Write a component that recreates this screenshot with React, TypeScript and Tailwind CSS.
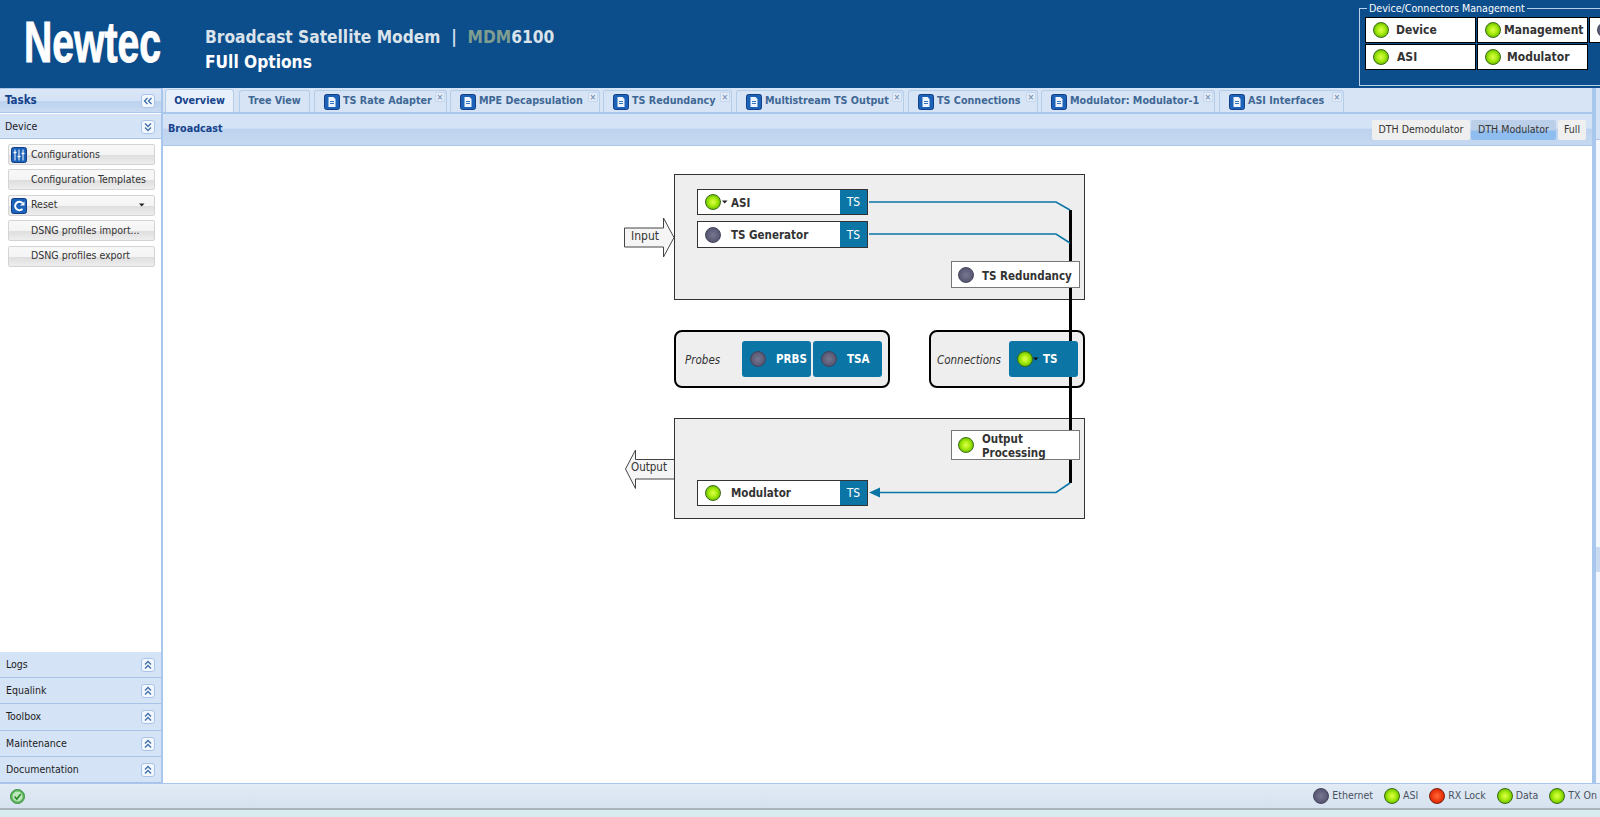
import React from "react";

const FONT = "font-['DejaVu_Sans_Condensed','DejaVu_Sans',sans-serif]";

function Led({ color = "green", className = "" }: { color?: "green" | "gray" | "red"; className?: string }) {
  const c =
    color === "green"
      ? "bg-[radial-gradient(circle_at_50%_50%,#dcff4e_0%,#aeee12_38%,#76cc00_68%,#4a9c00_100%)] border-[#3d6b12]"
      : color === "red"
      ? "bg-[radial-gradient(circle_at_50%_50%,#ff6a3a_0%,#ee3a10_50%,#c01c00_100%)] border-[#7a2010]"
      : "bg-[radial-gradient(circle_at_50%_50%,#77778f_0%,#5c5c78_60%,#45455e_100%)] border-[#44445a]";
  return <span className={`block w-4 h-4 shrink-0 rounded-full border ${c} ${className}`} />;
}

function Caret({ className = "" }: { className?: string }) {
  return (
    <svg width="6" height="4" viewBox="0 0 6 4" className={className}>
      <path d="M0 0.5h5.5L2.75 3.5z" fill="currentColor" />
    </svg>
  );
}

function Chevrons({ dir }: { dir: "up" | "down" | "left" }) {
  const rotate = dir === "up" ? "" : dir === "down" ? "rotate-180" : "-rotate-90";
  return (
    <span className="flex items-center justify-center w-[14px] h-[14px] rounded-[3px] border border-[#a9c4e6] bg-[#f2f7fd]">
      <svg width="10" height="10" viewBox="0 0 10 10" className={rotate} fill="none" stroke="#3f6fa8" strokeWidth="1.3">
        <path d="M2 4.5L5 1.5L8 4.5" />
        <path d="M2 8.5L5 5.5L8 8.5" />
      </svg>
    </span>
  );
}

function DocIcon() {
  return (
    <svg width="16" height="16" viewBox="0 0 16 16" className="shrink-0">
      <rect x="0.5" y="0.5" width="15" height="15" rx="2" fill="#1b62b8" stroke="#123f86" />
      <path d="M4.5 3h5l2 2v8h-7z" fill="#eef4fb" />
      <path d="M6 7.5h4M6 9.5h4" stroke="#1b62b8" strokeWidth="0.9" />
    </svg>
  );
}

function Tab({ label, width, active, doc, gap }: { label: string; width: string; active?: boolean; doc?: boolean; gap: string }) {
  return (
    <div
      className={`relative flex items-center gap-[3px] h-[22px] shrink-0 rounded-t-[3px] border border-b-0 border-[#b4cde9] text-[10.7px] font-bold ${width} ${gap} ${
        doc ? "justify-start pl-[9px]" : "justify-center"
      } ${active ? "bg-[#e8f1fb] text-[#15428b] h-[23px]" : "bg-[#d6e4f5] text-[#3f6794]"}`}
    >
      {doc && <DocIcon />}
      <span className="whitespace-nowrap">{label}</span>
      {doc && (
        <span className="absolute right-[1px] top-[1px] flex items-center justify-center w-[10px] h-[10px] rounded-[1px] bg-[#e3ecf8] border border-[#c4d6ec] text-[#7f98b8] text-[9px] leading-none font-bold">
          ×
        </span>
      )}
    </div>
  );
}

function TaskButton({ label, icon, caret }: { label: string; icon?: React.ReactNode; caret?: boolean }) {
  return (
    <div className="relative flex items-center h-[21px] rounded-[2px] border border-[#d4d4d4] bg-[linear-gradient(#f8f8f8_0%,#f4f4f4_50%,#dedede_55%,#eeeeee_100%)] text-[10.5px] text-[#333] pl-[22px] pr-1">
      {icon && <span className="absolute left-[2px] top-[2px]">{icon}</span>}
      <span className="whitespace-nowrap">{label}</span>
      {caret && <Caret className="ml-auto mr-[5px] text-[#222]" />}
    </div>
  );
}

function AccHeader({ label, h }: { label: string; h: string }) {
  return (
    <div className={`flex items-center justify-between pl-[6px] pr-[6px] border-b border-[#a8c3e6] bg-[#d5e3f6] text-[10.5px] text-[#1c1c1c] ${h}`}>
      <span>{label}</span>
      <Chevrons dir="up" />
    </div>
  );
}

function DeviceCell({ label, color = "green", gap }: { label: string; color?: "green" | "gray"; gap: string }) {
  return (
    <div className={`flex items-center h-[26px] bg-white border border-black text-[12px] font-bold text-[#333] pl-[7px] ${gap}`}>
      <Led color={color} />
      <span className="whitespace-nowrap">{label}</span>
    </div>
  );
}

function StatusItem({ color, label }: { color: "green" | "gray" | "red"; label: string }) {
  return (
    <div className="flex items-center gap-[3px] text-[10.5px] text-[#4a5260]">
      <Led color={color} />
      <span className="whitespace-nowrap">{label}</span>
    </div>
  );
}

function Node({ pos, led, label, caret, textTop }: { pos: string; led: "green" | "gray"; label: string; caret?: boolean; textTop: string }) {
  return (
    <div className={`absolute flex items-stretch bg-white border border-[#333] ${pos}`}>
      <div className="relative flex items-center flex-1 pl-[7px]">
        <Led color={led} />
        {caret && <Caret className="absolute left-[24px] top-[10px] text-[#222]" />}
        <span className={`absolute left-[33px] text-[11.5px] leading-[15px] font-bold text-[#333] whitespace-nowrap ${textTop}`}>{label}</span>
      </div>
      <div className="flex items-center justify-center w-[27px] bg-[#0b75a6] text-white text-[12px]">TS</div>
    </div>
  );
}

function SideNode({ pos, led, children, textPos }: { pos: string; led: "green" | "gray"; children: React.ReactNode; textPos: string }) {
  return (
    <div className={`absolute flex items-center bg-white border border-[#777] pl-[6px] ${pos}`}>
      <Led color={led} />
      <span className={`absolute left-[30px] text-[11.5px] leading-[14px] font-bold text-[#333] whitespace-nowrap ${textPos}`}>{children}</span>
    </div>
  );
}

function BlueButton({ pos, led, label, textLeft, caret }: { pos: string; led: "green" | "gray"; label: string; textLeft: string; caret?: boolean }) {
  return (
    <div className={`absolute flex items-center h-[36px] w-[69px] rounded-[3px] bg-[#0b75a6] ${pos}`}>
      <Led color={led} className="ml-[8px]" />
      {caret && <Caret className="absolute left-[24px] top-[16px] text-[#111]" />}
      <span className={`absolute top-[10px] text-[11.5px] leading-[16px] font-bold text-white ${textLeft}`}>{label}</span>
    </div>
  );
}

function Diagram() {
  return (
    <div className="relative w-[480px] h-[360px] mt-[26px] ml-[457px]">
      <div className="absolute left-[54px] top-[2px] w-[411px] h-[126px] bg-[#eeeeee] border border-[#333]" />
      <div className="absolute left-[54px] top-[246px] w-[411px] h-[101px] bg-[#eeeeee] border border-[#333]" />
      <div className="absolute left-[54px] top-[158px] w-[216px] h-[58px] bg-[#eeeeee] border-2 border-black rounded-[8px]" />
      <div className="absolute left-[309px] top-[158px] w-[156px] h-[58px] bg-[#eeeeee] border-2 border-black rounded-[8px]" />

      <svg width="480" height="360" viewBox="0 0 480 360" className="absolute left-0 top-0" fill="none">
        <path d="M450.5 38V311" stroke="#000" strokeWidth="3" />
        <path d="M249 30H436L450 38" stroke="#0b75a6" strokeWidth="1.6" />
        <path d="M249 62H436L450 71" stroke="#0b75a6" strokeWidth="1.6" />
        <path d="M258 320.5H436L450 311" stroke="#0b75a6" strokeWidth="1.6" />
        <path d="M249 320.5L260 315.5V325.5Z" fill="#0b75a6" />
        <path d="M4.5 56V75H43.5V85L54 65.5L43.5 46V56Z" fill="#f5f5f5" stroke="#444" />
        <path d="M54 287.5H15.5V278L5.5 297L15.5 316.5V307H54" fill="#f5f5f5" stroke="#444" />
      </svg>

      <span className="absolute left-[11px] top-[57px] text-[12px] leading-[15px] text-[#333]">Input</span>
      <span className="absolute left-[11px] top-[288px] text-[11.5px] leading-[15px] text-[#333]">Output</span>

      <Node pos="left-[77px] top-[17px] w-[171px] h-[26px]" led="green" label="ASI" caret textTop="top-[6px]" />
      <Node pos="left-[77px] top-[49px] w-[171px] h-[27px]" led="gray" label="TS Generator" textTop="top-[6px]" />
      <SideNode pos="left-[331px] top-[89px] w-[129px] h-[27px]" led="gray" textPos="top-[7px]">TS Redundancy</SideNode>

      <span className="absolute left-[65px] top-[180px] text-[11.5px] leading-[16px] italic text-[#333]">Probes</span>
      <BlueButton pos="left-[122px] top-[169px]" led="gray" label="PRBS" textLeft="left-[34px]" />
      <BlueButton pos="left-[193px] top-[169px]" led="gray" label="TSA" textLeft="left-[34px]" />
      <span className="absolute left-[317px] top-[180px] text-[11.5px] leading-[16px] italic text-[#333]">Connections</span>
      <BlueButton pos="left-[389px] top-[169px]" led="green" label="TS" textLeft="left-[34px]" caret />

      <SideNode pos="left-[331px] top-[258px] w-[129px] h-[30px]" led="green" textPos="top-[1px]">
        Output
        <br />
        Processing
      </SideNode>
      <Node pos="left-[77px] top-[308px] w-[171px] h-[26px]" led="green" label="Modulator" textTop="top-[5px]" />
    </div>
  );
}

export default function App() {
  return (
    <div className={`flex flex-col w-[1600px] h-[817px] overflow-hidden bg-[#d8ecf0] ${FONT}`}>
      {/* Header */}
      <header className="flex h-[88px] shrink-0 bg-[#0c4d8c] overflow-hidden">
        <div className="w-[205px] shrink-0 pl-[24px] pt-[9px]">
          <div className="origin-left scale-x-[0.675] text-[58px] leading-[66px] font-bold text-white font-['Liberation_Sans',sans-serif] whitespace-nowrap [-webkit-text-stroke:1px_white]">
            Newtec
          </div>
        </div>
        <div className="pt-[25px] text-[17.2px] leading-[25px] font-bold">
          <div className="text-[#dbe3ea] whitespace-nowrap">
            Broadcast Satellite Modem&nbsp;&nbsp;|&nbsp;&nbsp;<span className="text-[#7f9e90]">MDM</span>6100
          </div>
          <div className="text-white">FUll Options</div>
        </div>
        <fieldset className="ml-auto mr-[-30px] mt-[1px] w-[266px] h-[85px] shrink-0 border border-[#b9d0ea] pl-[5px]">
          <legend className="ml-[2px] px-[2px] text-[10.6px] leading-[14px] text-white whitespace-nowrap">Device/Connectors Management</legend>
          <div className="grid grid-cols-[111px_111px_40px] gap-[1px] mt-[2px]">
            <DeviceCell label="Device" gap="gap-[7px]" />
            <DeviceCell label="Management" gap="gap-[3px]" />
            <DeviceCell label="" color="gray" gap="" />
            <DeviceCell label="ASI" gap="gap-[8px]" />
            <DeviceCell label="Modulator" gap="gap-[6px]" />
          </div>
        </fieldset>
      </header>

      {/* Main */}
      <div className="flex flex-1 min-h-0 bg-[#a9c6ec]">
        {/* Sidebar */}
        <aside className="flex flex-col w-[161px] shrink-0 bg-white border-t border-[#a9c6ec]">
          <div className="flex items-center justify-between h-[24px] pl-[5px] pr-[6px] pt-[1px] bg-[linear-gradient(#dbe7f7_0%,#d3e2f5_50%,#bcd2ee_55%,#c9dbf2_100%)] border-b border-[#a9c6ec] text-[11.5px] font-bold text-[#15428b]">
            <span>Tasks</span>
            <Chevrons dir="left" />
          </div>
          <div className="flex items-center justify-between h-[25px] mt-[1px] pl-[5px] pr-[6px] pt-[1px] bg-[#d5e3f6] border-b border-[#a8c3e6] text-[10.5px] text-[#1c1c1c]">
            <span>Device</span>
            <Chevrons dir="down" />
          </div>
          <div className="flex flex-col gap-[4.4px] flex-1 pt-[5px] pl-[8px] pr-[6px]">
            <TaskButton
              label="Configurations"
              icon={
                <svg width="16" height="16" viewBox="0 0 16 16">
                  <rect x="0.5" y="0.5" width="15" height="15" rx="2" fill="#1b62b8" stroke="#123f86" />
                  <path d="M4 2.5v11M8 2.5v11M12 2.5v11" stroke="#fff" strokeWidth="1" />
                  <path d="M2.5 5.5h3M6.5 9.5h3M10.5 6.5h3" stroke="#fff" strokeWidth="1.6" />
                </svg>
              }
            />
            <TaskButton label="Configuration Templates" />
            <TaskButton
              label="Reset"
              caret
              icon={
                <svg width="16" height="16" viewBox="0 0 16 16" fill="none">
                  <rect x="0.5" y="0.5" width="15" height="15" rx="2" fill="#1b62b8" stroke="#123f86" />
                  <path d="M11.5 5.2A4.2 4.2 0 1 0 11.5 10.8" stroke="#fff" strokeWidth="2" />
                  <path d="M9 7.5h4.5V3.5z" fill="#fff" />
                </svg>
              }
            />
            <TaskButton label="DSNG profiles import..." />
            <TaskButton label="DSNG profiles export" />
          </div>
          <AccHeader label="Logs" h="h-[26px]" />
          <AccHeader label="Equalink" h="h-[26px]" />
          <AccHeader label="Toolbox" h="h-[27px]" />
          <AccHeader label="Maintenance" h="h-[26px]" />
          <AccHeader label="Documentation" h="h-[26px]" />
        </aside>

        {/* Center */}
        <main className="flex flex-col w-[1431px] shrink-0 ml-[1px] border-x-[1px] border-[#a9c6ec] min-w-0">
          <div className="flex items-end h-[25px] shrink-0 pl-[2px] bg-[#d6e4f5] border-b border-[#a9c6ec]">
            <Tab label="Overview" width="w-[69px]" active gap="mr-[5px]" />
            <Tab label="Tree View" width="w-[71px]" gap="mr-[4px]" />
            <Tab label="TS Rate Adapter" width="w-[133px]" doc gap="mr-[3px]" />
            <Tab label="MPE Decapsulation" width="w-[150px]" doc gap="mr-[3px]" />
            <Tab label="TS Redundancy" width="w-[129px]" doc gap="mr-[4px]" />
            <Tab label="Multistream TS Output" width="w-[168px]" doc gap="mr-[4px]" />
            <Tab label="TS Connections" width="w-[130px]" doc gap="mr-[3px]" />
            <Tab label="Modulator: Modulator-1" width="w-[174px]" doc gap="mr-[4px]" />
            <Tab label="ASI Interfaces" width="w-[125px]" doc gap="" />
          </div>
          <div className="flex items-center justify-between h-[32px] shrink-0 pl-[5px] pr-[5px] mt-[1px] bg-[linear-gradient(#d5e3f6_0%,#d5e3f6_45%,#bdd2ee_50%,#c6d9f1_100%)] border-b border-[#a9c6ec]">
            <span className="text-[10.7px] font-bold text-[#15428b]">Broadcast</span>
            <div className="flex gap-[1px] text-[10.5px] text-[#333] pr-[1px]">
              <span className="flex items-center justify-center w-[98px] h-[20px] rounded-[2px] bg-[#efefef]">DTH Demodulator</span>
              <span className="flex items-center justify-center w-[85px] h-[20px] rounded-[2px] bg-[linear-gradient(#bccfe8_0%,#bccfe8_50%,#8fbdf0_55%,#8fbdf0_100%)]">DTH Modulator</span>
              <span className="flex items-center justify-center w-[28px] h-[20px] ml-[1px] rounded-[2px] bg-[#efefef]">Full</span>
            </div>
          </div>
          <div className="flex-1 min-h-0 bg-white overflow-hidden">
            <Diagram />
          </div>
        </main>

        {/* Collapsed east panel */}
        <div className="flex flex-col flex-1 ml-[3px] bg-[#f4f8fd]">
          <div className="h-[52px] bg-[#d3e2f5] border-b border-[#a9c6ec]" />
          <div className="h-[407px]" />
          <div className="h-[25px] bg-[#c9daf1]" />
        </div>
      </div>

      {/* Status bar */}
      <footer className="flex items-center justify-between h-[25px] shrink-0 pl-[10px] bg-[linear-gradient(#e2ebf6,#d6e2ef)] border-t border-[#a9c6ec]">
        <svg width="15" height="15" viewBox="0 0 15 15">
          <circle cx="7.5" cy="7.5" r="7" fill="#5cb85c" stroke="#3f8f3f" />
          <circle cx="7.5" cy="7.5" r="5" fill="#bfe8bf" />
          <path d="M4.5 7.5L6.8 10L10.8 5" fill="none" stroke="#2f8f2f" strokeWidth="1.8" />
        </svg>
        <div className="flex gap-[11px] pr-[3px]">
          <StatusItem color="gray" label="Ethernet" />
          <StatusItem color="green" label="ASI" />
          <StatusItem color="red" label="RX Lock" />
          <StatusItem color="green" label="Data" />
          <StatusItem color="green" label="TX On" />
        </div>
      </footer>
      <div className="h-[2px] shrink-0 bg-[#a9b4bd]" />
      <div className="flex-none h-[7px]" />
    </div>
  );
}
